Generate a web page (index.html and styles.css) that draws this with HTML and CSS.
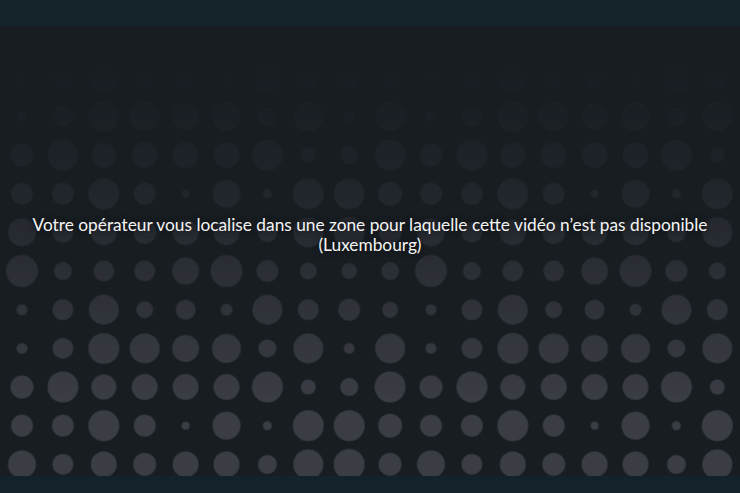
FILE: index.html
```html
<!DOCTYPE html>
<html lang="fr">
<head>
  <meta charset="UTF-8">
  <meta name="viewport" content="width=device-width, initial-scale=1.0">
  <title>Vidéo indisponible</title>
  <link rel="stylesheet" href="styles.css">
</head>
<body>

  <!-- Top bar -->
  <div class="top-bar"></div>

  <!-- Player area -->
  <div class="stage">
    <svg class="dots" width="100%" height="100%" aria-hidden="true">
      <defs>
        <pattern id="dot-tile" patternUnits="userSpaceOnUse" x="1.55" y="-6.33" width="409" height="232">
          <g fill="#3a3d44">
            <!-- row 1 -->
            <circle cx="20.45" cy="19.33" r="16"/>
            <circle cx="61.35" cy="19.33" r="9"/>
            <circle cx="102.25" cy="19.33" r="10.5"/>
            <circle cx="143.15" cy="19.33" r="10.5"/>
            <circle cx="184.05" cy="19.33" r="13.5"/>
            <circle cx="224.95" cy="19.33" r="16"/>
            <circle cx="265.85" cy="19.33" r="11"/>
            <circle cx="306.75" cy="19.33" r="8.5"/>
            <circle cx="347.65" cy="19.33" r="8"/>
            <circle cx="388.55" cy="19.33" r="9"/>
            <!-- row 2 -->
            <circle cx="20.45" cy="58" r="5.5"/>
            <circle cx="61.35" cy="58" r="10.5"/>
            <circle cx="102.25" cy="58" r="15"/>
            <circle cx="143.15" cy="58" r="8.5"/>
            <circle cx="184.05" cy="58" r="10"/>
            <circle cx="224.95" cy="58" r="6"/>
            <circle cx="265.85" cy="58" r="15"/>
            <circle cx="306.75" cy="58" r="10.5"/>
            <circle cx="347.65" cy="58" r="11"/>
            <circle cx="388.55" cy="58" r="8"/>
            <!-- row 3 -->
            <circle cx="20.45" cy="96.67" r="5.5"/>
            <circle cx="61.35" cy="96.67" r="10.5"/>
            <circle cx="102.25" cy="96.67" r="15.5"/>
            <circle cx="143.15" cy="96.67" r="15"/>
            <circle cx="184.05" cy="96.67" r="13.5"/>
            <circle cx="224.95" cy="96.67" r="14.5"/>
            <circle cx="265.85" cy="96.67" r="9"/>
            <circle cx="306.75" cy="96.67" r="15"/>
            <circle cx="347.65" cy="96.67" r="5.5"/>
            <circle cx="388.55" cy="96.67" r="15"/>
            <!-- row 4 -->
            <circle cx="20.45" cy="135.33" r="11.5"/>
            <circle cx="61.35" cy="135.33" r="15.5"/>
            <circle cx="102.25" cy="135.33" r="12.5"/>
            <circle cx="143.15" cy="135.33" r="13"/>
            <circle cx="184.05" cy="135.33" r="13"/>
            <circle cx="224.95" cy="135.33" r="13"/>
            <circle cx="265.85" cy="135.33" r="15.5"/>
            <circle cx="306.75" cy="135.33" r="7.5"/>
            <circle cx="347.65" cy="135.33" r="9"/>
            <circle cx="388.55" cy="135.33" r="15.5"/>
            <!-- row 5 -->
            <circle cx="20.45" cy="174" r="11"/>
            <circle cx="61.35" cy="174" r="11"/>
            <circle cx="102.25" cy="174" r="15.5"/>
            <circle cx="143.15" cy="174" r="11"/>
            <circle cx="184.05" cy="174" r="4"/>
            <circle cx="224.95" cy="174" r="14"/>
            <circle cx="265.85" cy="174" r="4.5"/>
            <circle cx="306.75" cy="174" r="15.5"/>
            <circle cx="347.65" cy="174" r="15.5"/>
            <circle cx="388.55" cy="174" r="12"/>
            <!-- row 6 -->
            <circle cx="20.45" cy="212.67" r="14"/>
            <circle cx="61.35" cy="212.67" r="10.5"/>
            <circle cx="102.25" cy="212.67" r="13"/>
            <circle cx="143.15" cy="212.67" r="11.5"/>
            <circle cx="184.05" cy="212.67" r="13"/>
            <circle cx="224.95" cy="212.67" r="13"/>
            <circle cx="265.85" cy="212.67" r="9.5"/>
            <circle cx="306.75" cy="212.67" r="15"/>
            <circle cx="347.65" cy="212.67" r="15.5"/>
            <circle cx="388.55" cy="212.67" r="11.5"/>
          </g>
        </pattern>
        <linearGradient id="dot-fade" gradientUnits="userSpaceOnUse" x1="0" y1="24" x2="0" y2="374">
          <stop offset="0" stop-color="#fff" stop-opacity="0"/>
          <stop offset="0.3" stop-color="#fff" stop-opacity="0.18"/>
          <stop offset="0.63" stop-color="#fff" stop-opacity="0.55"/>
          <stop offset="1" stop-color="#fff" stop-opacity="1"/>
        </linearGradient>
        <mask id="dot-mask">
          <rect width="100%" height="100%" fill="url(#dot-fade)"/>
        </mask>
        <filter id="soft">
          <feGaussianBlur stdDeviation="0.7"/>
        </filter>
      </defs>
      <rect width="100%" height="100%" fill="url(#dot-tile)" mask="url(#dot-mask)" filter="url(#soft)"/>
    </svg>

    <p class="message">
      Votre opérateur vous localise dans une zone pour laquelle cette vidéo n’est pas disponible<br>
      (Luxembourg)
    </p>
  </div>

  <!-- Bottom bar -->
  <div class="bottom-bar"></div>

</body>
</html>
```

FILE: styles.css
```css
/* General Styles */
html, body {
  height: 100%;
}

body {
  margin: 0;
  padding: 0;
  background-color: #181d22;
  color: #f4f4f4;
  font-family: 'Lato', 'Open Sans', sans-serif;
  display: flex;
  flex-direction: column;
  overflow: hidden;
}

/* Bars */
.top-bar {
  height: 26px;
  flex: none;
  background-color: #14222a;
}

.bottom-bar {
  height: 17px;
  flex: none;
  background-color: #14232b;
}

/* Player area */
.stage {
  position: relative;
  flex: 1;
  display: flex;
  justify-content: center;
  align-items: center;
  padding-bottom: 32px;
  box-sizing: border-box;
}

.dots {
  position: absolute;
  top: 0;
  left: 0;
}

.message {
  position: relative;
  margin: 0;
  text-align: center;
  font-size: 17.3px;
  line-height: 20px;
  text-shadow: 0 0 6px rgba(0, 0, 0, 0.6);
}
```
